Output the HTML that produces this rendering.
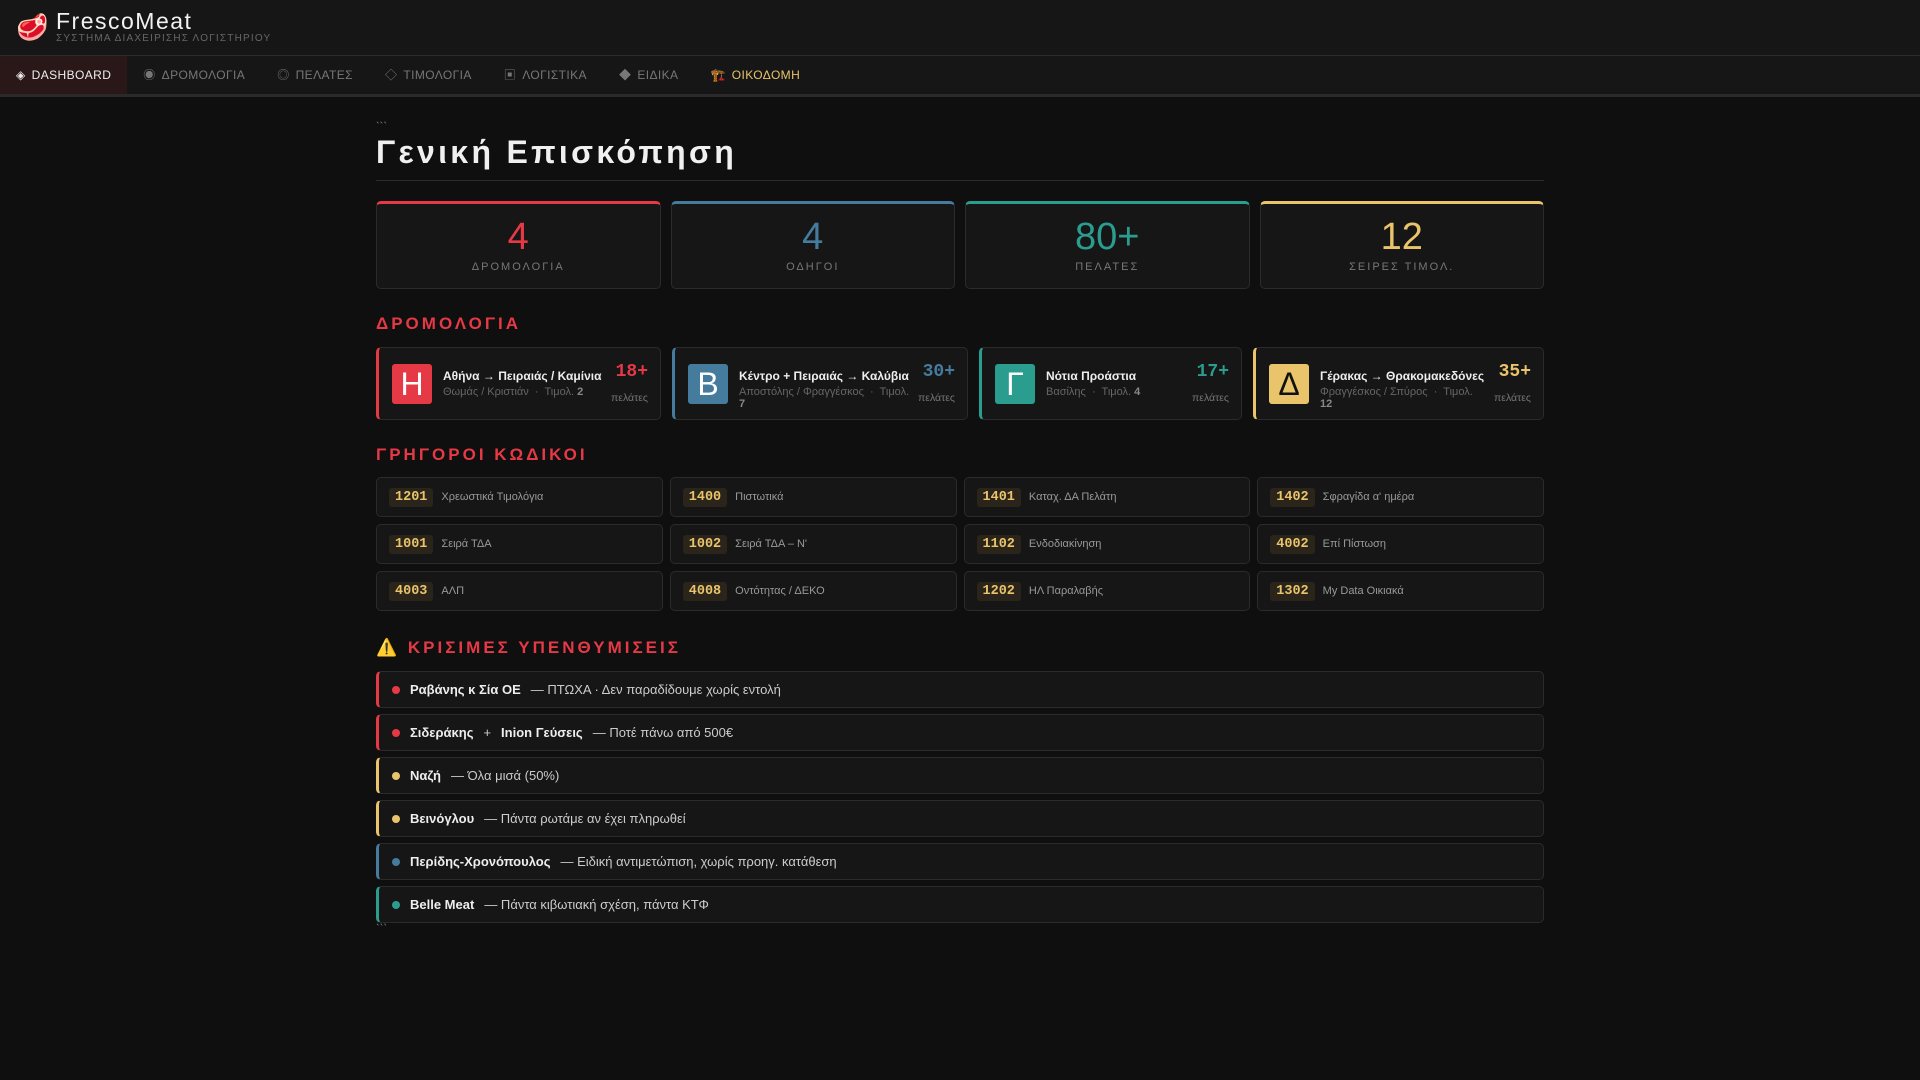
<!DOCTYPE html>
<html><head><meta charset="utf-8"><style>
*{box-sizing:border-box;margin:0;padding:0}
body{width:1920px;height:1080px;background:#0f0f0f;font-family:"Liberation Sans","Noto Sans CJK SC",sans-serif;color:#ddd;overflow:hidden}
.hdr{height:56px;background:#161616;border-bottom:1px solid #2b2b2b;position:relative}
.logo{position:absolute;left:16px;top:12px;font-size:26px}
.brand{position:absolute;left:56px;top:8px;font-size:23px;color:#f2f2f2;letter-spacing:1.5px}
.sub{position:absolute;left:56px;top:33px;font-size:10px;color:#666;letter-spacing:1.2px}
.nav{height:41px;background:#161616;border-bottom:3px solid #2a2a2a;display:flex}
.nav div{height:38px;line-height:38px;padding:0 16px 0 16px;font-size:12px;color:#777;letter-spacing:0.4px}
.nav .act{background:#2a1718;color:#eee}
.nav .ok{color:#e9c46a}
.nav span{margin-right:6px}
.main{position:absolute;left:376px;top:97px;width:1168px}
.tick{font-size:11px;color:#888;margin-top:24px;height:10px}
h1{font-size:32px;font-weight:bold;color:#f0f0f0;letter-spacing:3.3px;margin-top:3px;padding-bottom:9px;border-bottom:1px solid #2c2c2c}
.stats{display:flex;gap:10px;margin-top:20px}
.stat{flex:1;height:88px;background:#161616;border:1px solid #2b2b2b;border-top:3px solid;border-radius:5px;text-align:center}
.stat b{display:block;font-weight:normal;font-size:38px;margin-top:12px;line-height:42px}
.stat i{font-style:normal;display:block;font-size:11px;color:#777;letter-spacing:2px;margin-top:3px}
h2{font-size:17px;color:#e63946;letter-spacing:3px;font-weight:bold}
.routes{display:flex;justify-content:space-between;margin-top:13px}
.rc{height:73px;background:#161616;border:1px solid #2b2b2b;border-left:3px solid;border-radius:5px;position:relative}
.rc .ic{position:absolute;left:13px;top:16px;width:40px;height:40px;border-radius:3px;color:#fff;font-size:32px;text-align:center;line-height:40px}
.rc .t{position:absolute;left:64px;top:21px;font-size:12px;font-weight:bold;color:#eee;white-space:nowrap}
.rc .s{position:absolute;left:64px;top:38px;font-size:11px;color:#666;line-height:12px}
.rc .s b{color:#888}
.rc .n{position:absolute;right:12px;top:14px;font-family:"Liberation Mono",monospace;font-weight:bold;font-size:18px}
.rc .p{position:absolute;right:12px;top:44px;font-size:10.5px;color:#777}
.codes{display:grid;grid-template-columns:repeat(4,1fr);gap:7px;margin-top:12px}
.cd{height:40px;background:#161616;border:1px solid #2b2b2b;border-radius:5px;display:flex;align-items:center;padding-left:12px;font-size:11px;color:#999}
.cd b{font-family:"Liberation Mono",monospace;font-size:13.5px;color:#e9c46a;background:#2a241a;padding:2px 6px;border-radius:3px;margin-right:8px}
.wr{height:37px;background:#161616;border:1px solid #2b2b2b;border-left:3px solid;border-radius:5px;margin-bottom:6px;display:flex;align-items:center;padding-left:13px;font-size:13px;color:#ccc}
.wr .d{width:8px;height:8px;border-radius:50%;margin-right:10px}
.wr b{color:#eee;margin-right:10px}
.wr .pl{margin-right:10px}
</style></head><body>
<div class="hdr"><div class="logo">🥩</div><div class="brand">FrescoMeat</div><div class="sub">ΣΥΣΤΗΜΑ ΔΙΑΧΕΙΡΙΣΗΣ ΛΟΓΙΣΤΗΡΙΟΥ</div></div>
<div class="nav"><div class="act"><span>◈</span>DASHBOARD</div><div><span>◉</span>ΔΡΟΜΟΛΟΓΙΑ</div><div><span>◎</span>ΠΕΛΑΤΕΣ</div><div><span>◇</span>ΤΙΜΟΛΟΓΙΑ</div><div><span>▣</span>ΛΟΓΙΣΤΙΚΑ</div><div><span>◆</span>ΕΙΔΙΚΑ</div><div class="ok"><span>🏗️</span>ΟΙΚΟΔΟΜΗ</div></div>
<div class="main">
<div class="tick">&#96;&#96;&#96;</div>
<h1>Γενική Επισκόπηση</h1>
<div class="stats">
<div class="stat" style="border-top-color:#e63946"><b style="color:#e63946">4</b><i>ΔΡΟΜΟΛΟΓΙΑ</i></div>
<div class="stat" style="border-top-color:#457b9d"><b style="color:#457b9d">4</b><i>ΟΔΗΓΟΙ</i></div>
<div class="stat" style="border-top-color:#2a9d8f"><b style="color:#2a9d8f">80+</b><i>ΠΕΛΑΤΕΣ</i></div>
<div class="stat" style="border-top-color:#e9c46a"><b style="color:#e9c46a">12</b><i>ΣΕΙΡΕΣ ΤΙΜΟΛ.</i></div>
</div>
<h2 style="margin-top:25px">ΔΡΟΜΟΛΟΓΙΑ</h2>
<div class="routes">
<div class="rc" style="width:285px;border-left-color:#e63946"><div class="ic" style="background:#e63946">Η</div><div class="t">Αθήνα → Πειραιάς / Καμίνια</div><div class="s">Θωμάς / Κριστιάν &nbsp;·&nbsp; Τιμολ. <b>2</b></div><div class="n" style="color:#e63946">18+</div><div class="p">πελάτες</div></div>
<div class="rc" style="width:296px;border-left-color:#457b9d"><div class="ic" style="background:#457b9d">Β</div><div class="t">Κέντρο + Πειραιάς → Καλύβια</div><div class="s">Αποστόλης / Φραγγέσκος &nbsp;·&nbsp; Τιμολ.<br><b>7</b></div><div class="n" style="color:#457b9d">30+</div><div class="p">πελάτες</div></div>
<div class="rc" style="width:263px;border-left-color:#2a9d8f"><div class="ic" style="background:#2a9d8f">Γ</div><div class="t">Νότια Προάστια</div><div class="s">Βασίλης &nbsp;·&nbsp; Τιμολ. <b>4</b></div><div class="n" style="color:#2a9d8f">17+</div><div class="p">πελάτες</div></div>
<div class="rc" style="width:291px;border-left-color:#e9c46a"><div class="ic" style="background:#e9c46a;color:#111">Δ</div><div class="t">Γέρακας → Θρακομακεδόνες</div><div class="s">Φραγγέσκος / Σπύρος &nbsp;·&nbsp; Τιμολ.<br><b>12</b></div><div class="n" style="color:#e9c46a">35+</div><div class="p">πελάτες</div></div>
</div>
<h2 style="margin-top:25px">ΓΡΗΓΟΡΟΙ ΚΩΔΙΚΟΙ</h2>
<div class="codes">
<div class="cd"><b>1201</b>Χρεωστικά Τιμολόγια</div><div class="cd"><b>1400</b>Πιστωτικά</div><div class="cd"><b>1401</b>Καταχ. ΔΑ Πελάτη</div><div class="cd"><b>1402</b>Σφραγίδα α' ημέρα</div>
<div class="cd"><b>1001</b>Σειρά ΤΔΑ</div><div class="cd"><b>1002</b>Σειρά ΤΔΑ – Ν'</div><div class="cd"><b>1102</b>Ενδοδιακίνηση</div><div class="cd"><b>4002</b>Επί Πίστωση</div>
<div class="cd"><b>4003</b>ΑΛΠ</div><div class="cd"><b>4008</b>Οντότητας / ΔΕΚΟ</div><div class="cd"><b>1202</b>ΗΛ Παραλαβής</div><div class="cd"><b>1302</b>My Data Οικιακά</div>
</div>
<h2 style="margin-top:27px;margin-bottom:13px">⚠️ ΚΡΙΣΙΜΕΣ ΥΠΕΝΘΥΜΙΣΕΙΣ</h2>
<div class="wr" style="border-left-color:#e63946"><span class="d" style="background:#e63946"></span><b>Ραβάνης κ Σία ΟΕ</b>— ΠΤΩΧΑ · Δεν παραδίδουμε χωρίς εντολή</div>
<div class="wr" style="border-left-color:#e63946"><span class="d" style="background:#e63946"></span><b>Σιδεράκης</b><span class="pl">+</span><b>Inion Γεύσεις</b>— Ποτέ πάνω από 500€</div>
<div class="wr" style="border-left-color:#e9c46a"><span class="d" style="background:#e9c46a"></span><b>Ναζή</b>— Όλα μισά (50%)</div>
<div class="wr" style="border-left-color:#e9c46a"><span class="d" style="background:#e9c46a"></span><b>Βεινόγλου</b>— Πάντα ρωτάμε αν έχει πληρωθεί</div>
<div class="wr" style="border-left-color:#457b9d"><span class="d" style="background:#457b9d"></span><b>Περίδης-Χρονόπουλος</b>— Ειδική αντιμετώπιση, χωρίς προηγ. κατάθεση</div>
<div class="wr" style="border-left-color:#2a9d8f;margin-bottom:0"><span class="d" style="background:#2a9d8f"></span><b>Belle Meat</b>— Πάντα κιβωτιακή σχέση, πάντα ΚΤΦ</div>
<div class="tick" style="margin-top:0">&#96;&#96;&#96;</div>
</div>
</body></html>
